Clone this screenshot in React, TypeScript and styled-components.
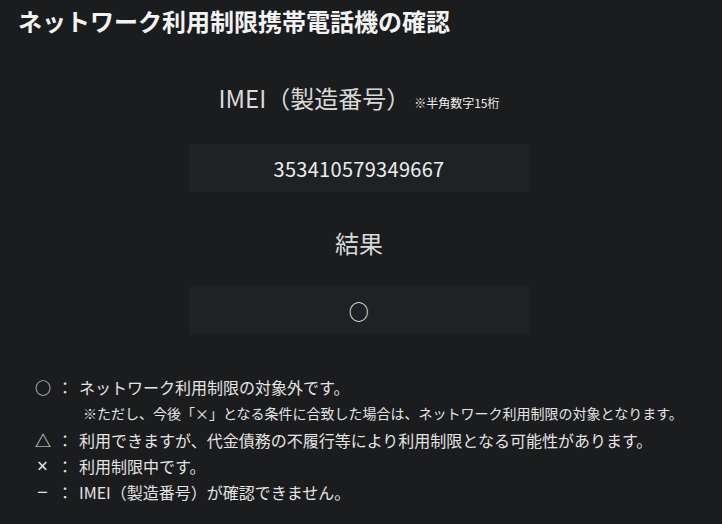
import React from "react";
import styled, { createGlobalStyle } from "styled-components";

const GlobalStyle = createGlobalStyle`
  html, body {
    margin: 0;
    padding: 0;
    background: #1b1c1e;
  }
  body {
    font-family: "Noto Sans CJK JP", "Noto Sans", sans-serif;
    color: #e6e6e6;
  }
`;

const Page = styled.div`
  padding: 3px 18px 20px;
`;

const Title = styled.h1`
  margin: 0;
  font-size: 24px;
  font-weight: 700;
  line-height: 36px;
  color: #f2f2f2;
`;

const Form = styled.section`
  width: 340px;
  margin: 41px 0 0 171px;
  display: flex;
  flex-direction: column;
  align-items: center;
`;

const Label = styled.div<{ $top?: number }>`
  display: flex;
  align-items: baseline;
  justify-content: center;
  gap: 4px;
  height: 36px;
  margin-top: ${(p) => p.$top ?? 0}px;
  font-size: 24px;
  line-height: 36px;
  color: #d9d9d9;
`;

const Note = styled.span`
  font-size: 12px;
  line-height: 12px;
  color: #f0f0f0;
`;

const Field = styled.div<{ $top: number }>`
  width: 340px;
  height: 48px;
  margin-top: ${(p) => p.$top}px;
  background: #1f2224;
  display: flex;
  align-items: center;
  justify-content: center;
  font-size: 20px;
  letter-spacing: 0.3px;
  color: #ececec;
`;

const Legend = styled.ul`
  list-style: none;
  margin: 39px 0 0 17px;
  padding: 0;
`;

const Row = styled.li`
  display: flex;
  align-items: center;
  height: 26px;
  font-size: 16px;
  color: #e4e4e4;
`;

const SubRow = styled.li`
  height: 27px;
  line-height: 27px;
  padding-left: 48px;
  font-size: 14px;
  color: #e4e4e4;
`;

const Symbol = styled.span<{ $latin?: boolean }>`
  width: 22px;
  flex: none;
  padding-left: ${(p) => (p.$latin ? 2 : 0)}px;
  box-sizing: border-box;
  font-family: ${(p) => (p.$latin ? '"Noto Sans", sans-serif' : "inherit")};
  font-size: ${(p) => (p.$latin ? 19 : 16)}px;
  line-height: 26px;
`;

const Colon = styled.span`
  width: 16px;
  margin-right: 6px;
  text-align: center;
  flex: none;
`;

const legend = [
  { mark: "○", text: "ネットワーク利用制限の対象外です。" },
  { mark: "△", text: "利用できますが、代金債務の不履行等により利用制限となる可能性があります。" },
  { mark: "×", text: "利用制限中です。", latin: true },
  { mark: "−", text: "IMEI（製造番号）が確認できません。", latin: true },
];

export default function App() {
  return (
    <>
      <GlobalStyle />
      <Page>
        <Title>ネットワーク利用制限携帯電話機の確認</Title>
        <Form>
          <Label>
            IMEI（製造番号）<Note>※半角数字15桁</Note>
          </Label>
          <Field $top={28}>353410579349667</Field>
          <Label $top={33}>結果</Label>
          <Field $top={26}>○</Field>
        </Form>
        <Legend>
          {legend.map((item, i) => (
            <React.Fragment key={item.mark}>
              <Row>
                <Symbol $latin={item.latin}>{item.mark}</Symbol>
                <Colon>：</Colon>
                {item.text}
              </Row>
              {i === 0 && (
                <SubRow>
                  ※ただし、今後「×」となる条件に合致した場合は、ネットワーク利用制限の対象となります。
                </SubRow>
              )}
            </React.Fragment>
          ))}
        </Legend>
      </Page>
    </>
  );
}
